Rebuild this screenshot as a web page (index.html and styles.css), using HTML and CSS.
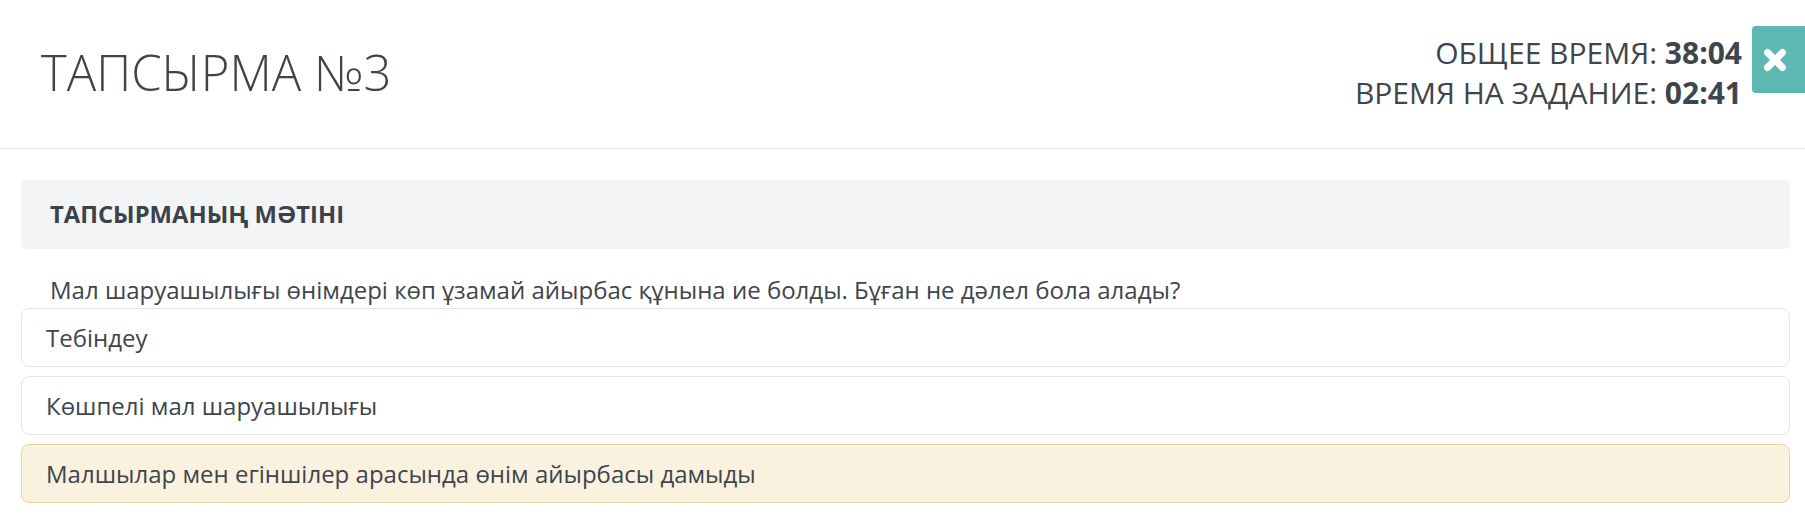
FILE: index.html
```html
<!DOCTYPE html>
<html lang="kk">
<head>
<meta charset="utf-8">
<title>ТАПСЫРМА №3</title>
<link rel="stylesheet" href="styles.css">
</head>
<body>
<header class="top">
  <h1 class="title">ТАПСЫРМА №3</h1>
  <div class="right">
    <div class="timers">
      <div class="timer">ОБЩЕЕ ВРЕМЯ: <b>38:04</b></div>
      <div class="timer">ВРЕМЯ НА ЗАДАНИЕ: <b>02:41</b></div>
    </div>
    <button class="close" type="button" aria-label="close">
      <svg width="24" height="24" viewBox="0 0 24 24"><path d="M4.5 4.5 L19.5 19.5 M19.5 4.5 L4.5 19.5" stroke="#fff" stroke-width="7" stroke-linecap="round" fill="none"/></svg>
    </button>
  </div>
</header>
<main class="content">
  <div class="panel-head">ТАПСЫРМАНЫҢ МӘТІНІ</div>
  <p class="question">Мал шаруашылығы өнімдері көп ұзамай айырбас құнына ие болды. Бұған не дәлел бола алады?</p>
  <div class="options">
    <div class="option">Тебіндеу</div>
    <div class="option">Көшпелі мал шаруашылығы</div>
    <div class="option selected">Малшылар мен егіншілер арасында өнім айырбасы дамыды</div>
  </div>
</main>
</body>
</html>
```
FILE: styles.css
```css
html, body {
  margin: 0;
  padding: 0;
  background: #fff;
  overflow: hidden;
}
body {
  font-family: "Open Sans", "Noto Sans", sans-serif;
  color: #40454c;
}
.top {
  height: 148px;
  border-bottom: 1px solid #e4e5e7;
  display: flex;
  justify-content: space-between;
  align-items: flex-start;
  padding-left: 41px;
  box-sizing: content-box;
}
.title {
  margin: 42px 0 0 0;
  font-size: 49px;
  line-height: 60px;
  font-weight: 300;
  color: #3f444b;
  letter-spacing: 0;
}
.right {
  display: flex;
  align-items: flex-start;
}
.timers {
  margin-top: 33px;
  text-align: right;
  font-size: 30px;
  line-height: 40px;
  font-weight: 400;
  color: #40454c;
}
.timers b {
  font-weight: 700;
}
.close {
  margin: 26px 0 0 10px;
  width: 53px;
  height: 67px;
  border: none;
  border-radius: 4px 0 0 4px;
  background: #5cb8b1;
  padding: 0 0 0 11px;
  display: flex;
  align-items: center;
  justify-content: flex-start;
}
.close svg {
  display: block;
}
.content {
  padding: 31px 15px 0 21px;
}
.panel-head {
  height: 69px;
  background: #f3f4f6;
  border-radius: 6px;
  font-size: 23.8px;
  font-weight: 700;
  line-height: 69px;
  padding-left: 29px;
  color: #3d4148;
}
.question {
  margin: 23px 0 0 0;
  padding-left: 29px;
  font-size: 24px;
  line-height: 36px;
  color: #40454c;
}
.options {
  display: flex;
  flex-direction: column;
  gap: 9px;
}
.option {
  height: 57px;
  line-height: 57px;
  border: 1px solid #e4e4e6;
  border-radius: 8px;
  background: #fff;
  padding: 0 24px;
  font-size: 24px;
  color: #40454c;
}
.option.selected {
  background: #faf2df;
  border-color: #e4d6a3;
}
```
